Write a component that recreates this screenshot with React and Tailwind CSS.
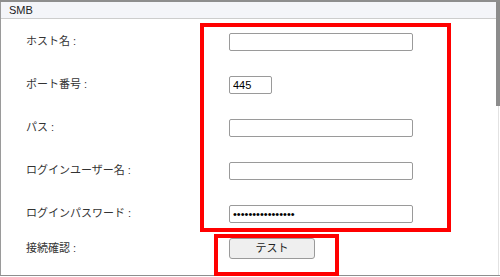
import React from 'react'

const rows = [
  { label: 'ホスト名', value: '', width: 'w-[184px]' },
  { label: 'ポート番号', value: '445', width: 'w-[43px]' },
  { label: 'パス', value: '', width: 'w-[184px]' },
  { label: 'ログインユーザー名', value: '', width: 'w-[184px]' },
  { label: 'ログインパスワード', value: 'xxxxxxxxxxxxxxxx', width: 'w-[184px]', password: true },
]

function Field({ label, value, width, password }) {
  return (
    <div className="flex h-[43px] items-center">
      <label className="w-[228px] shrink-0 pl-[25px] text-[11px] text-[#333]">
        {label}&nbsp;:
      </label>
      <input
        type={password ? 'password' : 'text'}
        defaultValue={value}
        readOnly
        className={`${width} h-[18px] rounded-[2px] border border-[#9a9a9a] bg-white px-[3px] text-[11px] text-black outline-none`}
      />
    </div>
  )
}

export default function App() {
  return (
    <div
      className="relative h-[277px] w-[500px] overflow-hidden bg-white"
      style={{ fontFamily: '"Liberation Sans", "Noto Sans CJK JP", sans-serif' }}
    >
      <div className="flex h-[276px] border-t-2 border-b border-[#8e8e8e]">
        <div className="flex-1 border-l border-[#9a9a9a]">
          <div className="flex h-[17px] items-center border-b border-[#cdcdcd] bg-[#f4f5f9] pl-[8px] text-[11px] text-[#222]">
            SMB
          </div>
          <div className="pt-[1px]">
            {rows.map((r) => (
              <Field key={r.label} {...r} />
            ))}
            <div className="flex h-[27px] items-center">
              <span className="w-[228px] shrink-0 pl-[25px] text-[11px] text-[#333]">接続確認&nbsp;:</span>
              <button className="h-[21px] w-[86px] rounded-[3px] border border-[#9a9a9a] bg-[#efefef] text-[11px] text-[#222]">
                テスト
              </button>
            </div>
          </div>
        </div>
        <div className="relative w-[4px] bg-white">
          <div className="absolute right-0 top-0 h-[104px] w-[4px] bg-[#8c8c8c]" />
          <div className="absolute right-[1px] top-[104px] bottom-0 w-px bg-[#e2e2e2]" />
        </div>
      </div>

      <div className="absolute left-[200px] top-[23px] h-[209px] w-[251px] border-4 border-[#ff0000]" />
      <div className="absolute left-[214px] top-[234px] h-[42px] w-[125px] border-4 border-[#ff0000]" />
    </div>
  )
}
